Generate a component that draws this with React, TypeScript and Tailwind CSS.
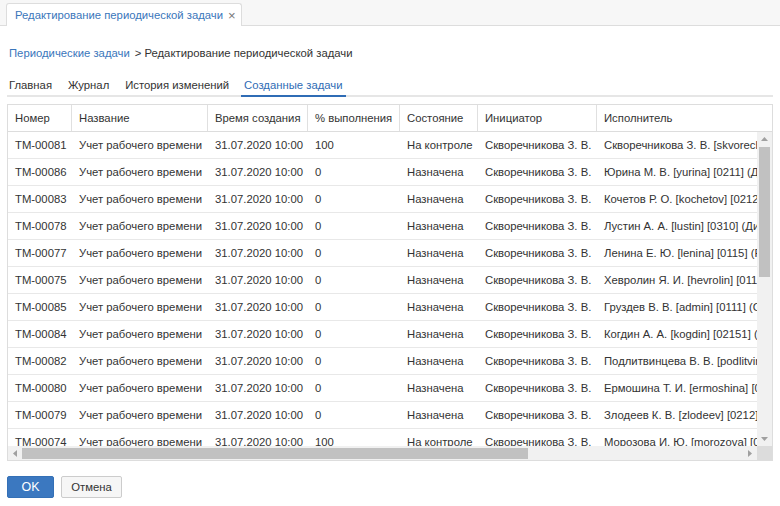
import React from 'react';

interface TaskRow {
  num: string;
  percent: string;
  state: string;
  executor: string;
}

const rows: TaskRow[] = [
  { num: 'ТМ-00081', percent: '100', state: 'На контроле', executor: 'Скворечникова З. В. [skvorechnikova] [0101] (Директор)' },
  { num: 'ТМ-00086', percent: '0', state: 'Назначена', executor: 'Юрина М. В. [yurina] [0211] (Диспетчер)' },
  { num: 'ТМ-00083', percent: '0', state: 'Назначена', executor: 'Кочетов Р. О. [kochetov] [0212] (Инженер)' },
  { num: 'ТМ-00078', percent: '0', state: 'Назначена', executor: 'Лустин А. А. [lustin] [0310] (Диспетчер)' },
  { num: 'ТМ-00077', percent: '0', state: 'Назначена', executor: 'Ленина Е. Ю. [lenina] [0115] (Референт)' },
  { num: 'ТМ-00075', percent: '0', state: 'Назначена', executor: 'Хевролин Я. И. [hevrolin] [0114] (Инженер)' },
  { num: 'ТМ-00085', percent: '0', state: 'Назначена', executor: 'Груздев В. В. [admin] [0111] (Секретарь)' },
  { num: 'ТМ-00084', percent: '0', state: 'Назначена', executor: 'Когдин А. А. [kogdin] [02151] (Инженер)' },
  { num: 'ТМ-00082', percent: '0', state: 'Назначена', executor: 'Подлитвинцева В. В. [podlitvintseva] [0213]' },
  { num: 'ТМ-00080', percent: '0', state: 'Назначена', executor: 'Ермошина Т. И. [ermoshina] [0116] (Бухгалтер)' },
  { num: 'ТМ-00079', percent: '0', state: 'Назначена', executor: 'Злодеев К. В. [zlodeev] [0212] (Инженер)' },
  { num: 'ТМ-00074', percent: '100', state: 'На контроле', executor: 'Морозова И. Ю. [morozova] [0117] (Экономист)' },
];

const columns = [
  { title: 'Номер', w: 'w-[64px]' },
  { title: 'Название', w: 'w-[136px]' },
  { title: 'Время создания', w: 'w-[100px]' },
  { title: '% выполнения', w: 'w-[92px]' },
  { title: 'Состояние', w: 'w-[78px]' },
  { title: 'Инициатор', w: 'w-[119px]' },
  { title: 'Исполнитель', w: 'w-[300px]' },
];

const Arrow = ({ dir }: { dir: 'up' | 'down' | 'left' | 'right' }) => {
  const pts = {
    up: '0,4 3.5,0 7,4',
    down: '0,0 3.5,4 7,0',
    left: '4,0 0,3.5 4,7',
    right: '0,0 4,3.5 0,7',
  }[dir];
  const vertical = dir === 'up' || dir === 'down';
  return (
    <svg width={vertical ? 7 : 4} height={vertical ? 4 : 7} className="block">
      <polygon points={pts} fill="#a0a0a0" />
    </svg>
  );
};

export default function App() {
  return (
    <div className="w-[780px] h-[506px] bg-white text-[11.3px] text-[#333] font-['Liberation_Sans',Arial,sans-serif] overflow-hidden">
      {/* Window tabs */}
      <div className="h-[26px] bg-[#f7f7f7] border-b border-[#dddddd] flex items-end pl-[6px]">
        <div className="h-[23px] -mb-px bg-white border border-b-0 border-[#dddddd] rounded-t-[3px] flex items-center pl-[8px] pr-[5px] gap-[5px]">
          <span className="text-[#3a76bb]">Редактирование периодической задачи</span>
          <span className="text-[#777] text-[13px] leading-none">×</span>
        </div>
      </div>

      <div className="px-[7px]">
        {/* Breadcrumb */}
        <div className="mt-[19px] h-[16px] flex items-center pl-[2px]">
          <span className="text-[#3a76bb]">Периодические задачи</span>
          <span className="ml-[5px]">&gt; Редактирование периодической задачи</span>
        </div>

        {/* Tabs */}
        <div className="mt-[13px] flex gap-[12px] border-b-2 border-[#e6e6e6] h-[23px]">
          {['Главная', 'Журнал', 'История изменений'].map((t) => (
            <div key={t} className="px-[2px] pt-[3px]">{t}</div>
          ))}
          <div className="-ml-[2px] px-[3px] pt-[3px] -mb-[2px] border-b-2 border-[#2f6cb5] text-[#2f6cb5]">Созданные задачи</div>
        </div>

        {/* Grid */}
        <div className="mt-[7px] h-[357px] border border-[#dddddd] flex flex-col">
          <div className="h-[27px] flex border-b border-[#dddddd] overflow-hidden shrink-0">
            {columns.map((c) => (
              <div key={c.title} className={`${c.w} shrink-0 border-r border-[#e0e0e0] pl-[7px] flex items-center whitespace-nowrap`}>
                {c.title}
              </div>
            ))}
          </div>

          <div className="flex-1 flex min-h-0">
            <div className="flex-1 overflow-hidden">
              {rows.map((r) => (
                <div key={r.num} className="h-[27px] flex border-b border-[#e8e8e8] whitespace-nowrap">
                  <div className="w-[64px] shrink-0 pl-[7px] flex items-center">{r.num}</div>
                  <div className="w-[136px] shrink-0 pl-[7px] flex items-center">Учет рабочего времени</div>
                  <div className="w-[100px] shrink-0 pl-[7px] flex items-center">31.07.2020 10:00</div>
                  <div className="w-[92px] shrink-0 pl-[7px] flex items-center">{r.percent}</div>
                  <div className="w-[78px] shrink-0 pl-[7px] flex items-center">{r.state}</div>
                  <div className="w-[119px] shrink-0 pl-[7px] flex items-center">Скворечникова З. В.</div>
                  <div className="w-[300px] shrink-0 pl-[7px] flex items-center">{r.executor}</div>
                </div>
              ))}
            </div>
            {/* vertical scrollbar */}
            <div className="w-[15px] shrink-0 bg-[#f1f1f1] flex flex-col items-center">
              <div className="h-[14px] flex items-center justify-center"><Arrow dir="up" /></div>
              <div className="w-[11px] h-[130px] bg-[#c1c1c1] mt-[1px]" />
              <div className="flex-1" />
              <div className="h-[14px] flex items-center justify-center"><Arrow dir="down" /></div>
            </div>
          </div>

          {/* horizontal scrollbar */}
          <div className="h-[14px] flex shrink-0">
            <div className="flex-1 bg-[#f1f1f1] flex items-center">
              <div className="w-[14px] flex justify-center"><Arrow dir="left" /></div>
              <div className="w-[506px] h-[11px] bg-[#c1c1c1]" />
              <div className="flex-1" />
              <div className="w-[14px] flex justify-center"><Arrow dir="right" /></div>
            </div>
            <div className="w-[15px] bg-[#dcdcdc]" />
          </div>
        </div>

        {/* Buttons */}
        <div className="mt-[15px] flex gap-[7px]">
          <button className="w-[47px] h-[22px] rounded-[2px] bg-[#3b78c0] border border-[#3470b6] text-white text-[12.5px]">OK</button>
          <button className="w-[61px] h-[22px] rounded-[2px] bg-[#f6f6f6] border border-[#cccccc] text-[#333]">Отмена</button>
        </div>
      </div>
    </div>
  );
}
